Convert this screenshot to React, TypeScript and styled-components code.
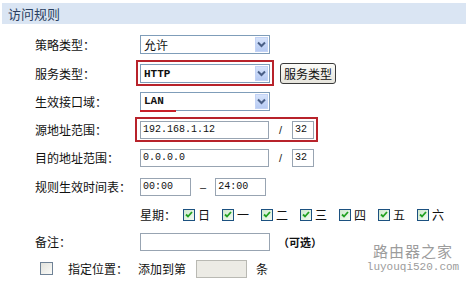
import React from "react";
import styled, { createGlobalStyle } from "styled-components";

const GlobalStyle = createGlobalStyle`
  html, body {
    margin: 0;
    padding: 0;
    background: #fff;
  }
  body {
    font-family: "Noto Sans CJK SC", "Noto Sans", sans-serif;
    font-size: 12px;
    color: #111;
  }
`;

const Page = styled.div`
  position: relative;
  width: 466px;
  height: 281px;
  overflow: hidden;
  padding-top: 3px;
  box-sizing: border-box;
`;

const Header = styled.div`
  margin-left: 2px;
  height: 21px;
  background: #dae5f3;
  color: #2a3f5f;
  font-size: 13px;
  line-height: 21px;
  padding-left: 6px;
`;

const Form = styled.div`
  display: flex;
  flex-direction: column;
  padding-top: 6px;
`;

const Row = styled.div<{ $h: number }>`
  display: grid;
  grid-template-columns: 105px 1fr;
  align-items: center;
  height: ${(p) => p.$h}px;
  padding-left: 35px;
`;

const Label = styled.div`
  display: flex;
  align-items: center;
  white-space: nowrap;
`;

const Field = styled.div<{ $shift?: number }>`
  display: flex;
  align-items: center;
  white-space: nowrap;
  margin-left: ${(p) => p.$shift || 0}px;
`;

const SelectBox = styled.div`
  position: relative;
  width: 130px;
  height: 19px;
  box-sizing: border-box;
  border: 1px solid #7f9db9;
  background: #fff;
  display: flex;
  align-items: center;
  padding-left: 3px;
  font-family: "Liberation Mono", monospace;
  font-size: 11px;
  font-weight: bold;
  color: #111;
`;

const CjkValue = styled.span`
  font-family: "Noto Sans CJK SC", sans-serif;
  font-size: 12px;
  font-weight: normal;
`;

const ArrowButton = styled.span`
  position: absolute;
  right: 1px;
  top: 1px;
  width: 13px;
  height: 15px;
  background: linear-gradient(#d6e3fb, #b7cbf3);
  border: 1px solid #c3d3f5;
  box-sizing: border-box;
  display: flex;
  align-items: center;
  justify-content: center;
`;

const RedUnderline = styled.span`
  position: absolute;
  left: -1px;
  bottom: -2px;
  width: 36px;
  height: 2px;
  background: #c8202a;
`;

const Highlight = styled.div<{ $shift: number }>`
  display: inline-flex;
  align-items: center;
  border: 2px solid #b8232b;
  padding: 2px 2px 1px ${(p) => p.$shift - 2}px;
  margin-left: -${(p) => p.$shift}px;
`;

const TextInput = styled.div<{ $w: number; $gray?: boolean; $mx?: string }>`
  width: ${(p) => p.$w}px;
  height: 18px;
  box-sizing: border-box;
  border: 1px solid ${(p) => (p.$gray ? "#b9b9b3" : "#98a4b2")};
  background: ${(p) => (p.$gray ? "#ecebe5" : "#fff")};
  margin: ${(p) => p.$mx || "0"};
  display: flex;
  align-items: center;
  padding-left: 2px;
  font-family: "Liberation Mono", monospace;
  font-size: 10px;
  color: #111;
`;

const Sep = styled.span<{ $l: number; $r: number }>`
  margin: 0 ${(p) => p.$r}px 0 ${(p) => p.$l}px;
  font-family: "Liberation Sans", sans-serif;
  font-size: 11px;
  color: #222;
`;

const PlainButton = styled.div`
  margin-left: 6px;
  height: 21px;
  padding: 0 3px;
  box-sizing: border-box;
  border: 1px solid #3a3a3a;
  border-radius: 3px;
  background: linear-gradient(#fbfbf8, #e6e4dc);
  display: flex;
  align-items: center;
  font-size: 12px;
`;

const WeekLabel = styled.span`
  margin-right: 7px;
`;

const Week = styled.div`
  display: flex;
  align-items: center;
  gap: 12px;
`;

const Day = styled.span`
  display: inline-flex;
  align-items: center;
  gap: 3px;
`;

const CheckBox = styled.span<{ $on?: boolean; $size: number }>`
  width: ${(p) => p.$size}px;
  height: ${(p) => p.$size}px;
  box-sizing: border-box;
  border: 1px solid ${(p) => (p.$on ? "#1c5180" : "#6f8296")};
  background: ${(p) =>
    p.$on
      ? "linear-gradient(135deg, #cfe8cf, #f3fbf1)"
      : "linear-gradient(135deg, #e2e2dc, #fbfbf8)"};
  display: inline-flex;
  align-items: center;
  justify-content: center;
  flex: none;
`;

const PositionBox = styled(CheckBox)`
  margin: 0 15px 0 5px;
`;

const Hint = styled.span`
  margin-left: 8px;
  font-weight: bold;
  font-size: 11px;
`;

const Mark = styled.div`
  position: absolute;
  left: 366px;
  top: 243px;
  width: 94px;
  display: flex;
  flex-direction: column;
  align-items: center;
  gap: 3px;
  color: #9c9c9c;
  pointer-events: none;
`;

const MarkTitle = styled.span`
  font-family: "Noto Sans CJK SC", serif;
  font-size: 15px;
  letter-spacing: 1px;
  line-height: 16px;
  height: 16px;
`;

const MarkUrl = styled.span`
  font-family: "Liberation Mono", monospace;
  font-size: 11px;
  line-height: 11px;
  height: 11px;
`;

const Chevron = () => (
  <svg width="9" height="7" viewBox="0 0 9 7">
    <path d="M1 1.5 L4.5 5 L8 1.5" fill="none" stroke="#4a5f86" strokeWidth="2" />
  </svg>
);

const Tick = () => (
  <svg width="8" height="7" viewBox="0 0 8 7">
    <path d="M1 3.5 L3 5.5 L7 1" fill="none" stroke="#21a121" strokeWidth="1.8" />
  </svg>
);

const Select = ({ children, underline }: { children: React.ReactNode; underline?: boolean }) => (
  <SelectBox>
    {children}
    <ArrowButton>
      <Chevron />
    </ArrowButton>
    {underline && <RedUnderline />}
  </SelectBox>
);

const days = ["日", "一", "二", "三", "四", "五", "六"];

export default function App() {
  return (
    <Page>
      <GlobalStyle />
      <Header>访问规则</Header>
      <Form>
        <Row $h={29}>
          <Label>策略类型：</Label>
          <Field>
            <Select>
              <CjkValue>允许</CjkValue>
            </Select>
          </Field>
        </Row>
        <Row $h={28}>
          <Label>服务类型：</Label>
          <Field>
            <Highlight $shift={4}>
              <Select>HTTP</Select>
            </Highlight>
            <PlainButton>服务类型</PlainButton>
          </Field>
        </Row>
        <Row $h={28}>
          <Label>生效接口域：</Label>
          <Field>
            <Select underline>LAN</Select>
          </Field>
        </Row>
        <Row $h={28}>
          <Label>源地址范围：</Label>
          <Field>
            <Highlight $shift={5}>
              <TextInput $w={129}>192.168.1.12</TextInput>
              <Sep $l={10} $r={10}>/</Sep>
              <TextInput $w={22}>32</TextInput>
            </Highlight>
          </Field>
        </Row>
        <Row $h={29}>
          <Label>目的地址范围：</Label>
          <Field>
            <TextInput $w={129}>0.0.0.0</TextInput>
            <Sep $l={10} $r={10}>/</Sep>
            <TextInput $w={22}>32</TextInput>
          </Field>
        </Row>
        <Row $h={29}>
          <Label>规则生效时间表：</Label>
          <Field>
            <TextInput $w={51}>00:00</TextInput>
            <Sep $l={9} $r={9}>–</Sep>
            <TextInput $w={51}>24:00</TextInput>
          </Field>
        </Row>
        <Row $h={27}>
          <Label />
          <Field>
            <WeekLabel>星期：</WeekLabel>
            <Week>
              {days.map((d) => (
                <Day key={d}>
                  <CheckBox $on $size={12}>
                    <Tick />
                  </CheckBox>
                  {d}
                </Day>
              ))}
            </Week>
          </Field>
        </Row>
        <Row $h={27}>
          <Label>备注：</Label>
          <Field>
            <TextInput $w={130} />
            <Hint>（可选）</Hint>
          </Field>
        </Row>
        <Row $h={27}>
          <Label>
            <PositionBox $size={13} />
            指定位置：
          </Label>
          <Field $shift={-2}>
            添加到第
            <TextInput $w={51} $gray $mx="0 9px 0 10px" />
            条
          </Field>
        </Row>
      </Form>
      <Mark>
        <MarkTitle>路由器之家</MarkTitle>
        <MarkUrl>luyouqi520.com</MarkUrl>
      </Mark>
    </Page>
  );
}
